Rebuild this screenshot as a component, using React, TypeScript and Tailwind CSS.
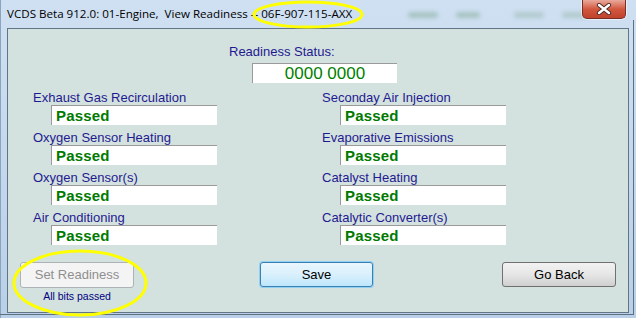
import React from "react";

const left = [
  "Exhaust Gas Recirculation",
  "Oxygen Sensor Heating",
  "Oxygen Sensor(s)",
  "Air Conditioning",
];
const right = [
  "Seconday Air Injection",
  "Evaporative Emissions",
  "Catalyst Heating",
  "Catalytic Converter(s)",
];

function Field({ label }: { label: string }) {
  return (
    <div className="flex flex-col">
      <div className="h-[15px] text-[13px] leading-[15px] text-[#1f1a8f] whitespace-nowrap">{label}</div>
      <div className="ml-[18px] w-[166px] h-[20px] bg-white border-t border-l border-[#9a9a9a] flex items-center pl-[4px]">
        <span className="text-[15px] font-bold leading-none text-[#007a00] tracking-[0.2px]">Passed</span>
      </div>
    </div>
  );
}

export default function App() {
  return (
    <div
      className="relative w-[636px] h-[318px] overflow-hidden bg-gradient-to-b from-[#cfe0f2] via-[#c4d8ee] to-[#b9d0e8]"
      style={{ fontFamily: '"Liberation Sans", Arial, sans-serif' }}
    >
      {/* title bar */}
      <div className="h-[28px] flex items-start">
        <div className="pl-[7px] pt-[6px] leading-[16px] text-black whitespace-nowrap text-[11.6px]" style={{ fontFamily: '"Open Sans", "Noto Sans", sans-serif' }}>
          VCDS Beta 912.0: 01-Engine,&nbsp; View Readiness -- 06F-907-115-AXX
        </div>
        <div className="flex gap-[18px] ml-[56px] mt-[12px]">
          <div className="w-[30px] h-[6px] rounded bg-[#6f9a7a]/40 blur-[2px]" />
          <div className="w-[24px] h-[6px] rounded bg-[#6f9a7a]/40 blur-[2px]" />
          <div className="w-[30px] h-[6px] rounded bg-[#6f9a7a]/30 blur-[2px] ml-[16px]" />
          <div className="w-[30px] h-[6px] rounded bg-[#6f9a7a]/30 blur-[2px]" />
        </div>
      </div>

      {/* close button */}
      <div className="absolute left-[582px] top-0 w-[44px] h-[19px] rounded-b-[5px] border border-t-0 border-[#7a2f25] bg-gradient-to-b from-[#e9a99b] via-[#d2573f] to-[#c0432c] flex items-center justify-center shadow-[0_0_0_1px_rgba(255,255,255,0.5)]">
        <svg width="16" height="12" viewBox="0 0 16 12">
          <path d="M3 2 L13 10 M13 2 L3 10" stroke="#4a2a25" strokeWidth="4.2" strokeLinecap="round" />
          <path d="M3 2 L13 10 M13 2 L3 10" stroke="#ffffff" strokeWidth="2.4" strokeLinecap="round" />
        </svg>
      </div>

      {/* client area */}
      <div className="ml-[7px] w-[622px] h-[285px] border border-[#627587] bg-[#d3e1df] flex flex-col">
        <div className="pt-[15px] pl-[221px] h-[15px] box-content text-[13px] leading-[15px] text-[#1f1a8f]">Readiness Status:</div>
        <div className="mt-[4px] ml-[244px] w-[145px] h-[20px] bg-white border-t border-l border-[#9a9a9a] flex items-center justify-center">
          <span className="text-[17px] leading-none text-[#008000]">0000 0000</span>
        </div>

        <div className="mt-[7px] pl-[25px] grid grid-cols-[289px_auto]">
          <div className="flex flex-col gap-[5px]">
            {left.map((l) => (
              <Field key={l} label={l} />
            ))}
          </div>
          <div className="flex flex-col gap-[5px]">
            {right.map((l) => (
              <Field key={l} label={l} />
            ))}
          </div>
        </div>

        <div className="mt-[17px] pl-[12px] flex items-start">
          <div className="flex flex-col items-center w-[114px]">
            <div className="w-[114px] h-[26px] rounded-[3px] border border-[#adb2b5] bg-[#f4f4f4] flex items-center justify-center text-[13px] text-[#8f8f8f]">
              Set Readiness
            </div>
            <div className="mt-[2px] text-[10.5px] leading-[13px] text-[#000080]">All bits passed</div>
          </div>
          <div className="ml-[126px] w-[113px] h-[25px] rounded-[3px] border border-[#3c7fb1] bg-gradient-to-b from-[#eaf6fd] via-[#d9f0fc] to-[#bee6fd] shadow-[0_0_0_1px_#8ed1f5] flex items-center justify-center text-[13px] text-black">
            Save
          </div>
          <div className="ml-[129px] w-[114px] h-[25px] rounded-[3px] border border-[#707070] bg-gradient-to-b from-[#f2f2f2] via-[#e6e6e6] to-[#cfcfcf] flex items-center justify-center text-[13px] text-black">
            Go Back
          </div>
        </div>
      </div>

      {/* window outer edges */}
      <div className="absolute right-[2px] top-[20px] bottom-[4px] w-px bg-[#5d6f80]" />
      <div className="absolute left-0 top-0 bottom-0 w-px bg-[#8ba3bb]" />
      <div className="absolute left-0 right-[2px] bottom-[3px] h-px bg-[#5d6f80]" />

      {/* yellow annotation ellipses */}
      <svg className="absolute left-[251px] top-0" width="114" height="30" viewBox="0 0 114 30">
        <ellipse cx="57" cy="14.5" rx="54" ry="12.5" fill="none" stroke="#ffff00" strokeWidth="3" />
      </svg>
      <svg className="absolute left-[11px] top-[249px]" width="138" height="69" viewBox="0 0 138 69">
        <ellipse cx="69" cy="34" rx="66" ry="32" fill="none" stroke="#ffff00" strokeWidth="3" />
      </svg>
    </div>
  );
}
